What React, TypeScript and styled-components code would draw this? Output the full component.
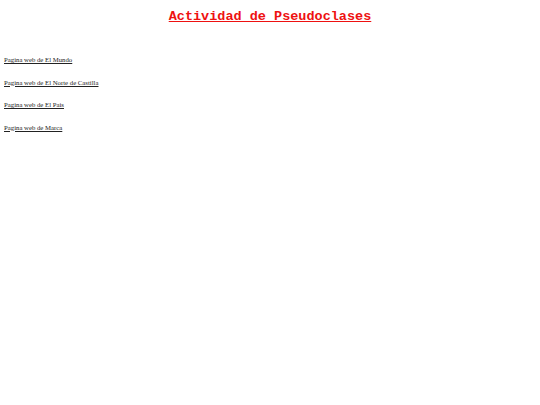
import React from "react";
import styled, { createGlobalStyle } from "styled-components";

const Global = createGlobalStyle`
  html, body { margin: 0; padding: 0; background: #ffffff; }
  body { font-family: "Liberation Serif", "Times New Roman", serif; }
`;

const Page = styled.div`
  display: flex;
  flex-direction: column;
  padding: 0 4px;
`;

const Title = styled.h1`
  margin: 9px 0 0;
  text-align: center;
  font-family: "Liberation Mono", "Courier New", monospace;
  font-size: 13.5px;
  font-weight: bold;
  color: #ee1111;
  text-decoration: underline;
  line-height: 15px;
`;

const LinkList = styled.div`
  display: flex;
  flex-direction: column;
  gap: 14.5px;
  margin-top: 32px;
`;

const Item = styled.a`
  font-size: 6.75px;
  line-height: 8px;
  color: #222222;
  text-decoration: underline;
`;

const links = [
  "Pagina web de El Mundo",
  "Pagina web de El Norte de Castilla",
  "Pagina web de El Pais",
  "Pagina web de Marca",
];

export default function App() {
  return (
    <Page>
      <Global />
      <Title>Actividad de Pseudoclases</Title>
      <LinkList>
        {links.map((l) => (
          <Item key={l} href="#">
            {l}
          </Item>
        ))}
      </LinkList>
    </Page>
  );
}
